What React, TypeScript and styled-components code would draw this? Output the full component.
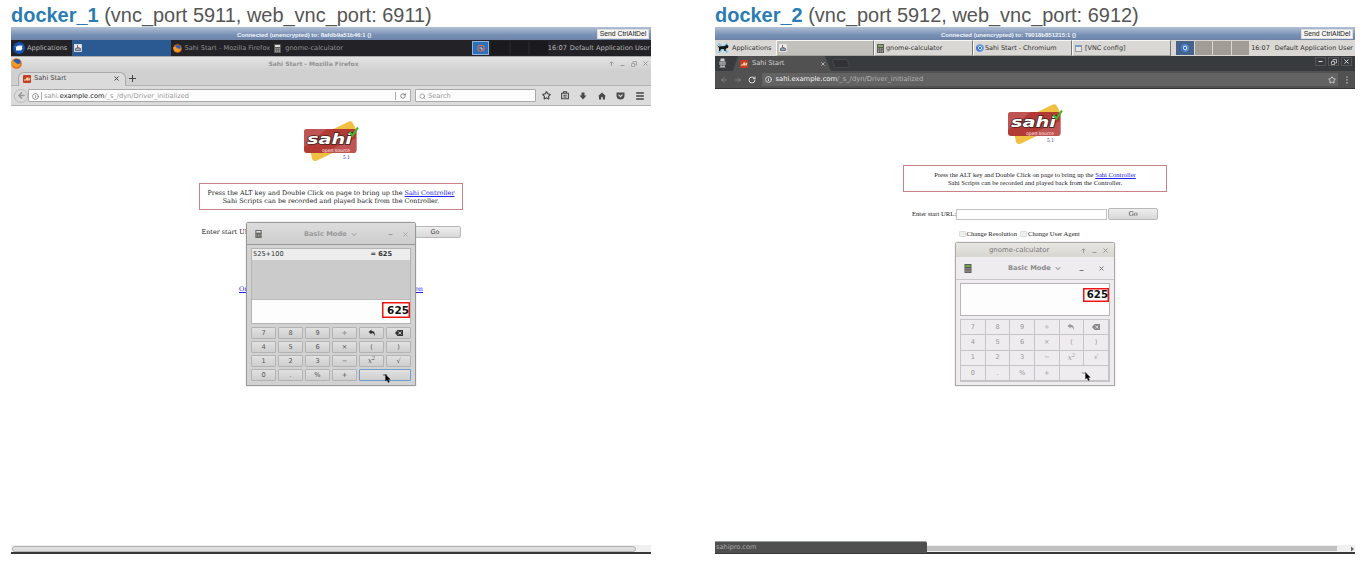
import React from "react";
import styled, { createGlobalStyle, css } from "styled-components";
import { Star, Menu, Search, RotateCw, Info, ArrowLeft, ArrowRight } from "lucide-react";

const sans = `"DejaVu Sans", sans-serif`;
const serif = `"DejaVu Serif", serif`;

const Global = createGlobalStyle`
  * { box-sizing: border-box; }
  body { margin: 0; background: #fff; overflow: hidden; }
`;

const Page = styled.main`
  display: flex;
  gap: 64px;
  padding-left: 11px;
  width: 1364px;
  height: 561px;
  font: 6.6px/1 ${sans};
  white-space: nowrap;
`;
const Column = styled.section`
  width: 640px;
  display: flex;
  flex-direction: column;
`;
const Heading = styled.h2`
  margin: 0;
  height: 27px;
  padding-top: 4px;
  font: 19.97px/23px "Liberation Sans", Arial, sans-serif;
  color: #555;
  b { color: #2b7cb3; }
`;
const Screen = styled.div`
  position: relative;
  height: 527px;
  display: flex;
  flex-direction: column;
  background: #fff;
`;
const VncBar = styled.div`
  height: 13px;
  flex: none;
  display: flex;
  align-items: center;
  background: linear-gradient(#b3c1d6, #7890b4 60%, #6d84a8);
  color: #f2f5fa;
  font: bold 6px/1 "Liberation Sans", sans-serif;
  padding: 0 2px 0 226px;
  > span { padding-top: 3px; }
`;
const SendKeys = styled.button`
  margin-left: auto;
  width: 52px;
  height: 10px;
  padding: 0;
  border: 1px solid #ddd;
  background: #f5f5f5;
  color: #222;
  font: 6.8px/8px "Liberation Sans", sans-serif;
`;
const Taskbar = styled.div<{ $light?: boolean }>`
  height: ${(p) => (p.$light ? 16 : 17)}px;
  flex: none;
  display: flex;
  align-items: stretch;
  background: ${(p) => (p.$light ? "#dad8d4" : "#232226")};
  color: ${(p) => (p.$light ? "#333" : "#b8b8b8")};
  border-bottom: ${(p) => (p.$light ? "0" : "1px solid #aaa")};
  font-size: ${(p) => (p.$light ? 6.45 : 6.6)}px;
`;
const Task = styled.div<{ $w: number; $bg?: string; $edge?: boolean; $color?: string; $gap?: number }>`
  width: ${(p) => p.$w}px;
  display: flex;
  align-items: center;
  gap: ${(p) => p.$gap ?? 2}px;
  padding-left: 2px;
  background: ${(p) => p.$bg ?? "transparent"};
  color: ${(p) => p.$color ?? "inherit"};
  ${(p) => p.$edge && css`border: 1px solid; border-color: #f7f7f5 #777 #a5a5a0 #f7f7f5;`}
`;
const Pager = styled.div<{ $light?: boolean; $gap: number }>`
  display: flex;
  margin-left: ${(p) => p.$gap}px;
  padding: 1px 0;
  gap: ${(p) => (p.$light ? 1 : 2)}px;
`;
const Desk = styled.div<{ $bg: string; $line?: string }>`
  width: 17.5px;
  display: flex;
  align-items: center;
  justify-content: center;
  background: ${(p) => p.$bg};
  border: 1px solid ${(p) => p.$line ?? p.$bg};
`;
const Clock = styled.div<{ $gap: number; $pad: number }>`
  margin-left: auto;
  display: flex;
  align-items: center;
  gap: ${(p) => p.$gap}px;
  padding-right: ${(p) => p.$pad}px;
`;

/* Firefox window */
const FxTitle = styled.div`
  height: 13px;
  flex: none;
  display: flex;
  justify-content: space-between;
  align-items: center;
  padding-right: 3px;
  background: linear-gradient(#e4e4e4, #d2d1d2);
  color: #929292;
  font-weight: bold;
  font-size: 6px;
  > span { padding-right: 4px; }
`;
const WinControls = styled.div<{ $gap: number }>`
  display: flex;
  justify-content: flex-end;
  align-items: center;
  gap: ${(p) => p.$gap}px;
`;
const FxTabs = styled.div`
  height: 16px;
  flex: none;
  display: flex;
  align-items: flex-end;
  background: #d1d0d1;
  border-bottom: 1px solid #b5b4b5;
`;
const FxTab = styled.div`
  width: 108px;
  height: 14px;
  margin: 0 0 -1px 7px;
  display: flex;
  align-items: center;
  gap: 3px;
  padding: 0 6px 2px 4px;
  background: #dcdbdc;
  border: 1px solid #aaa;
  border-bottom: 0;
  border-radius: 6px 6px 0 0;
  color: #444;
  svg:last-child { margin-left: auto; }
`;
const NewTab = styled.div`
  width: 12px;
  height: 14px;
  display: flex;
  align-items: center;
  justify-content: center;
`;
const FxTools = styled.div`
  height: 20px;
  flex: none;
  display: flex;
  align-items: center;
  background: #dcdbdc;
  border-bottom: 1px solid #b3b3b3;
  color: #444;
`;
const BackButton = styled.div`
  width: 14px;
  height: 14px;
  margin-left: 3px;
  border: 1px solid #bbb;
  border-radius: 50%;
  display: flex;
  align-items: center;
  justify-content: center;
  color: #999;
`;
const Field = styled.div<{ $w: number; $ml?: number }>`
  width: ${(p) => p.$w}px;
  height: 13px;
  margin-left: ${(p) => p.$ml ?? 0}px;
  display: flex;
  align-items: center;
  gap: 2px;
  padding: 1px 0 0 3px;
  background: #fcfcfc;
  border: 1px solid #a9a9a9;
  border-radius: 1px;
  color: #999;
  font-size: 6.63px;
  b { font-weight: normal; color: #222; }
`;
const Rule = styled.i`
  width: 1px;
  height: 8px;
  background: #aaa;
`;
const Reload = styled.span`
  margin-left: auto;
  width: 15px;
  height: 8px;
  display: flex;
  align-items: center;
  justify-content: center;
  border-left: 1px solid #aaa;
`;
const Tools = styled.div`
  flex: 1;
  display: flex;
  align-items: center;
  justify-content: space-between;
  padding: 0 6px 0 6px;
`;

/* Chromium window */
const CrTabs = styled.div`
  height: 15px;
  flex: none;
  display: flex;
  align-items: flex-end;
  background: #373b3e;
  color: #d4d4d4;
  padding-left: 3px;
  > svg { margin-bottom: 3px; }
`;
const CrTab = styled.div`
  width: 98px;
  height: 15px;
  margin-left: 6px;
  display: flex;
  align-items: center;
  gap: 4px;
  padding: 0 6px 0 7px;
  background: #515151;
  clip-path: polygon(5px 0, calc(100% - 6px) 0, 100% 100%, 0 100%);
  svg:last-child { margin-left: auto; }
`;
const CrGhost = styled.div`
  width: 16px;
  height: 9px;
  margin: 0 0 3px 2px;
  background: #303235;
  border: 1px solid #46464a;
  border-radius: 2px;
  transform: skewX(20deg);
`;
const CrWin = styled.div`
  display: flex;
  gap: 2px;
  margin: 0 3px 5px auto;
`;
const CrWinButton = styled.div`
  width: 11px;
  height: 9px;
  display: flex;
  align-items: center;
  justify-content: center;
  border: 1px solid #555;
`;
const CrTools = styled.div`
  height: 18px;
  flex: none;
  display: flex;
  align-items: center;
  gap: 6px;
  padding: 0 5px;
  background: #515151;
  border-bottom: 1px solid #333;
  color: #808080;
`;
const CrUrl = styled.div`
  flex: 1;
  height: 13px;
  display: flex;
  align-items: center;
  gap: 3.500px;
  padding: 0 2px 0 3px;
  background: #636363;
  color: #b2b2b2;
  font-size: 6.75px;
  b { font-weight: normal; color: #f4f4f4; }
  svg:last-child { margin-left: auto; }
`;

/* Page shown in both browsers */
const Doc = styled.div<{ $small?: boolean }>`
  flex: 1;
  display: flex;
  flex-direction: column;
  align-items: center;
  color: #222;
  font: ${(p) => (p.$small ? `6.62px/8px "Liberation Serif", serif` : `6.43px/8px ${serif}`)};
  padding-top: 12px;
  a { color: #2222e8; text-decoration: underline; }
`;
const Notice = styled.div<{ $mt: number }>`
  width: 264px;
  height: 27px;
  margin-top: ${(p) => p.$mt}px;
  padding-top: 5px;
  border: 1px solid #ca8286;
  text-align: center;
`;
const Form = styled.div<{ $w: number; $mt: number; $ml?: number }>`
  width: ${(p) => p.$w}px;
  margin-top: ${(p) => p.$mt}px;
  margin-left: ${(p) => p.$ml ?? 0}px;
  height: 12px;
  display: flex;
  align-items: center;
`;
const Input = styled.div`
  width: 151px;
  height: 11px;
  margin: 0 1px 0 auto;
  border: 1px solid #c4c4c4;
`;
const Go = styled.button<{ $w: number; $auto?: boolean }>`
  width: ${(p) => p.$w}px;
  height: 12px;
  margin-left: ${(p) => (p.$auto ? "auto" : "0")};
  padding: ${(p) => (p.$auto ? "0 0 0 9px" : "0")};
  border: 1px solid #b8b8b8;
  border-radius: 2px;
  background: linear-gradient(#eee, #d8d8d8);
  color: #444;
  font: inherit;
  font-family: ${(p) => (p.$auto ? sans : serif)};
`;
const Check = styled.i`
  width: 7px;
  height: 6px;
  margin: 0 1px 0 3px;
  border: 1px solid #ddd;
  border-radius: 1px;
  background: #efefef;
`;
const Links = styled.div`
  width: 184px;
  margin-top: 47px;
  display: flex;
  justify-content: space-between;
`;

/* Calculators */
const Calc = styled.div<{ $x: number; $y: number; $w: number; $h: number; $light?: boolean }>`
  position: absolute;
  left: ${(p) => p.$x}px;
  top: ${(p) => p.$y}px;
  width: ${(p) => p.$w}px;
  height: ${(p) => p.$h}px;
  background: ${(p) => (p.$light ? "#eeecef" : "#d3d2d3")};
  border: 1px solid ${(p) => (p.$light ? "#aaa9a5" : "#999")};
  border-radius: 3px 3px 0 0;
  box-shadow: 0 0 1px #888;
  color: ${(p) => (p.$light ? "#999" : "#555")};
`;
const CalcTitle = styled.div`
  height: 14px;
  display: flex;
  align-items: center;
  padding: 0 6px 0 33px;
  background: linear-gradient(#e9e7e3, #d7d5d0);
  color: #777;
  font-size: 6.9px;
  > :last-child { margin-left: auto; }
`;
const CalcHead = styled.div<{ $light?: boolean }>`
  height: ${(p) => (p.$light ? 23 : 22)}px;
  display: flex;
  align-items: center;
  padding: 1px ${(p) => (p.$light ? 10 : 7)}px 0 8px;
  border-bottom: 1px solid ${(p) => (p.$light ? "#c9c7ca" : "#999")};
  background: ${(p) => (p.$light ? "#eeecef" : "linear-gradient(#dddcdd, #cfcecf)")};
  color: ${(p) => (p.$light ? "#8a8a8a" : "#999")};
  font-weight: bold;
  font-size: 6.7px;
  > span { margin-left: ${(p) => (p.$light ? 36 : 42)}px; margin-right: 4px; }
  > :last-child { margin-left: auto; }
`;
const Display = styled.div<{ $light?: boolean }>`
  height: ${(p) => (p.$light ? 33 : 76)}px;
  margin: 3px 4px 0;
  display: flex;
  flex-direction: column;
  border: 1px solid #b5b5b5;
  background: #fdfdfd;
`;
const History = styled.div`
  height: 51px;
  background: #cccbcc;
  border-bottom: 1px solid #bbb;
`;
const Entry = styled.div`
  height: 11px;
  display: flex;
  align-items: center;
  justify-content: space-between;
  padding: 0 18px 0 1px;
  background: #ededed;
  color: #333;
`;
const Result = styled.div<{ $w: number; $h: number; $size: number }>`
  align-self: flex-end;
  width: ${(p) => p.$w}px;
  height: ${(p) => p.$h}px;
  margin-top: ${(p) => (p.$size > 10.3 ? 2 : 4)}px;
  padding-top: 1px;
  display: flex;
  align-items: center;
  justify-content: flex-end;
  box-shadow: inset 0 0 0 1.5px #f01414;
  color: #111;
  font-weight: bold;
  font-size: ${(p) => p.$size}px;
  padding-right: 1px;
`;
const Keys = styled.div<{ $light?: boolean }>`
  display: grid;
  grid-template-columns: repeat(6, 1fr);
  ${(p) =>
    p.$light
      ? css`grid-auto-rows: 15.3px; margin: 3px 4px 0; border: 1px solid #c5c4c6;`
      : css`grid-auto-rows: 12px; gap: 2px; margin: 3px 4px 0;`}
`;
const Key = styled.div<{ $light?: boolean; $wide?: boolean }>`
  display: flex;
  align-items: center;
  justify-content: center;
  grid-column: span ${(p) => (p.$wide ? 2 : 1)};
  ${(p) =>
    p.$light
      ? css`border: solid #c5c4c6; border-width: 0 1px 1px 0;`
      : css`
          border: 1px solid ${p.$wide ? "#6f9cc9" : "#b3b3b3"};
          border-radius: 1px;
          background: linear-gradient(#e2e1e2, #cfcecf);
        `}
  em { font-family: ${serif}; font-size: 7px; padding-top: 2px; }
  sup { font-size: 5px; line-height: 0; }
`;
const Cursor = styled.svg<{ $x: number; $y: number }>`
  position: absolute;
  left: ${(p) => p.$x}px;
  top: ${(p) => p.$y}px;
`;

/* Bottom of each screen */
const Bottom = styled.div`
  height: 9px;
  flex: none;
  display: flex;
  background: #f0f0f0;
  border-bottom: 2px solid #383838;
`;
const FxThumb = styled.div`
  width: 624px;
  height: 6px;
  margin: 1px 0 0 1px;
  border: 1px solid #b2b2b2;
  border-radius: 3px;
  background: #dedede;
`;
const CrThumb = styled.div`
  width: 410px;
  height: 5px;
  margin: 1px 13px 0 212px;
  background: #c0c0c0;
  flex: none;
`;
const Status = styled.div`
  position: absolute;
  left: 0;
  bottom: 1px;
  width: 212px;
  height: 12px;
  padding: 2px 0 0 1px;
  border-top: 1px solid #9aa09c;
  border-radius: 0 2px 0 0;
  background: #4f4f4f;
  color: #aaa;
  font-size: 6.6px;
`;

const SahiFavicon = () => (
  <svg width="8" height="8" viewBox="0 0 8 8">
    <rect width="8" height="8" rx="1" fill="#c53d22" />
    <path d="M1 5h2l1-2h1l-.5 2H6l1-2" stroke="#ffe2b8" strokeWidth="1.1" fill="none" />
  </svg>
);
const Firefox = ({ size = 9 }: { size?: number }) => (
  <svg width={size} height={size} viewBox="0 0 10 10">
    <circle cx="5" cy="5" r="4.8" fill="#e06a1a" />
    <circle cx="5.4" cy="4" r="3" fill="#2a5fae" />
    <path d="M.3 3.5C1.5 2 3 3 4.2 4.2c1 1 2.4 1.8 4.5.4C8.500 8 6 9 4 8.500 1.500 8 .4 6 .3 3.500z" fill="#f09a28" />
  </svg>
);
const Chromium = () => (
  <svg width="8" height="8" viewBox="0 0 10 10">
    <circle cx="5" cy="5" r="4.7" fill="#5c94ea" />
    <path d="M5 5L1 2.500A4.700 4.700 0 0 0 4 9.600z" fill="#3c72cf" />
    <circle cx="5" cy="5" r="2.100" fill="#3a6fd0" stroke="#fff" strokeWidth=".9" />
  </svg>
);
const VncIcon = () => (
  <svg width="8" height="8" viewBox="0 0 8 8">
    <rect x=".5" y=".5" width="7" height="7" fill="#e8e8e8" stroke="#eee" strokeWidth=".7" />
    <path d="M3.500 1v3M1.500 6.500V4.500l2-.7 3 .7v2z" stroke="#456" fill="#9ab" strokeWidth=".8" />
    <path d="M3.500 2.800L6 4.500" stroke="#b55" strokeWidth=".8" />
  </svg>
);
const CalcIcon = ({ screen = "#ddd", w = 7, h = 9 }: { screen?: string; w?: number; h?: number }) => (
  <svg width={w} height={h} viewBox="0 0 7 9">
    <rect width="7" height="9" rx=".6" fill="#5a5a56" />
    <rect x="1" y="1" width="5" height="2" fill={screen} />
    <path d="M1 4.700h5M1 6.200h5M1 7.700h5" stroke="#bbb" strokeWidth=".8" strokeDasharray="1.200 .7" />
  </svg>
);
const Xfce = ({ light }: { light?: boolean }) => (
  <svg width="12" height="12" viewBox="0 0 12 12">
    {light ? (
      <>
        <path d="M1.500 1.500l9 9M10.500 1.500l-9 9" stroke="#7cc9e3" strokeWidth="2.400" />
        <path d="M0 3l2 1.500 6-.5L9.500 2.500 11.500 4 11 6 9 6.500 8.500 9H7.500L7 7H4L3 9H2V6z" fill="#151515" />
      </>
    ) : (
      <>
        <circle cx="6" cy="6" r="6" fill="#1450ae" />
        <path d="M3 8.500V6L2.500 4l1.500.7L5 3l1 1.500L7 2.500l.7 1.700L9.500 3 9 5l.5 1.500L8 8.500z" fill="#fff" />
      </>
    )}
  </svg>
);
const Cross = ({ c = "#777", s = 5 }: { c?: string; s?: number }) => (
  <svg width={s} height={s} viewBox="0 0 5 5"><path d="M.5.5l4 4M4.500.5l-4 4" stroke={c} strokeWidth="1" /></svg>
);
const Dash = ({ c = "#999", low }: { c?: string; low?: boolean }) => (
  <svg width="5" height="5" viewBox="0 0 5 5"><path d={low ? "M.5 4.500h4" : "M.5 2.500h4"} stroke={c} /></svg>
);
const Up = () => (
  <svg width="5" height="5" viewBox="0 0 5 5"><path d="M2.500 5V1M.7 2.500L2.500.7l1.800 1.800" stroke="#999" fill="none" /></svg>
);
const Restore = ({ c = "#999" }: { c?: string }) => (
  <svg width="6" height="6" viewBox="0 0 6 6"><path d="M.5 2.500h3v3h-3zM2 2V.5h3.500V4H4" stroke={c} fill="none" strokeWidth=".8" /></svg>
);
const PagerWindow = () => (
  <svg width="8" height="8" viewBox="0 0 8 8">
    <rect x="1" y="1.500" width="6" height="5.500" rx="1.500" fill="#3b62b5" stroke="#e0763a" strokeWidth="1.200" />
    <path d="M2.500 4H5v2" stroke="#f3d9b0" strokeWidth=".9" fill="none" />
  </svg>
);
const Chevron = ({ c }: { c: string }) => (
  <svg width="6" height="5" viewBox="0 0 6 5"><path d="M.8 1.200L3 3.600l2.200-2.400" stroke={c} fill="none" /></svg>
);
const Undo = ({ c }: { c: string }) => (
  <svg width="8" height="8" viewBox="0 0 8 8">
    <path d="M.5 3L3.500.5v1.600C6 2 7.500 4 6.500 7.500 6.300 5 5.500 4 3.500 4v1.500z" fill={c} />
  </svg>
);
const Erase = ({ c }: { c: string }) => (
  <svg width="8" height="6" viewBox="0 0 8 6">
    <path d="M0 3L2.500 0H8v6H2.500z" fill={c} />
    <path d="M3.300 1.500l3 3M6.300 1.500l-3 3" stroke="#ddd" />
  </svg>
);
const Clipboard = () => (
  <svg width="8" height="9" viewBox="0 0 8 9">
    <path d="M.6 2.300h6.800v5.500H.6zM2.500 2.300V.8h3v1.500M2.300 4.200h3.400M2.300 6h3.400" fill="none" stroke="#484848" strokeWidth="1.100" />
  </svg>
);
const Download = () => (
  <svg width="8" height="8" viewBox="0 0 8 8">
    <path d="M2.500.5h3v3h2L4 7.500.5 3.500h2z" fill="#484848" />
  </svg>
);
const House = () => (
  <svg width="8" height="8" viewBox="0 0 8 8">
    <path d="M4 .5L8 4.200H7v3.300H4.800V5H3.200v2.500H1V4.200H0z" fill="#484848" />
  </svg>
);
const Pocket = () => (
  <svg width="9" height="8" viewBox="0 0 9 8">
    <path d="M.5.5h8v3a4 4 0 0 1-8 0z" fill="#4c4c4c" />
    <path d="M2.500 2.700l2 2 2-2" stroke="#ddd" fill="none" strokeWidth="1.100" />
  </svg>
);
const Incognito = () => (
  <svg width="9" height="10" viewBox="0 0 9 11">
    <path d="M2.500.5h4L7 3.500H2zM.5 4h8v1h-8z" fill="#ccc" />
    <circle cx="2.800" cy="6.600" r="1.300" fill="none" stroke="#ccc" />
    <circle cx="6.200" cy="6.600" r="1.300" fill="none" stroke="#ccc" />
    <path d="M1 10.500l1.500-2h4l1.500 2z" fill="#bbb" />
  </svg>
);
const LogoArt = styled.svg`
  flex: none;
  width: 62px;
  height: 44px;
`;
const Logo = () => (
  <LogoArt viewBox="0 0 62 44">
    <path d="M8.500 23L49 3.500Q51.500 2.500 52.500 4.500L56.500 12 56 24 17 42.500Q13.500 44 12 41z" fill="#f0c043" />
    <rect x="4" y="11" width="52.500" height="24" rx="3" fill="#b23a34" />
    <path d="M4 14q0-3 3-3h20L4 29zM56.500 20v12q0 3-3 3H22z" fill="#c8666a" opacity=".6" />
    <text x="7" y="26" fontFamily="DejaVu Sans" fontSize="13.500" fontWeight="bold" fontStyle="italic" fill="#fff" stroke="#3b2020" strokeWidth="1.300" paintOrder="stroke" textLength="45" lengthAdjust="spacingAndGlyphs">sahi</text>
    <text x="22" y="33.700" fontFamily="DejaVu Sans" fontSize="4.800" fill="#ffe9e2" textLength="28" lengthAdjust="spacingAndGlyphs">open source</text>
    <path d="M49.500 14l3 3.500L58 9.500" stroke="#45b32b" strokeWidth="2.200" fill="none" />
    <text x="43" y="41" fontFamily="DejaVu Serif" fontSize="5" fill="#2a22a8" textLength="7" lengthAdjust="spacingAndGlyphs">5.1</text>
  </LogoArt>
);
const Pointer = ({ x, y }: { x: number; y: number }) => (
  <Cursor $x={x} $y={y} width="6" height="9" viewBox="0 0 6 9">
    <path d="M.5.5v6.500l1.500-1.200L3.200 8.500l1.200-.5-1.100-2.600h2z" fill="#000" stroke="#222" strokeWidth=".4" />
  </Cursor>
);

const rows = [
  ["7", "8", "9", "÷", "undo", "erase"],
  ["4", "5", "6", "×", "(", ")"],
  ["1", "2", "3", "−", "sq", "√"],
  ["0", ".", "%", "+", "="],
];
const Keypad = ({ light }: { light?: boolean }) => (
  <Keys $light={light}>
    {rows.flat().map((k) => (
      <Key key={k} $light={light} $wide={k === "="}>
        {k === "undo" ? <Undo c={light ? "#999" : "#333"} />
          : k === "erase" ? <Erase c={light ? "#888" : "#333"} />
          : k === "sq" ? <em>x<sup>2</sup></em>
          : k}
      </Key>
    ))}
  </Keys>
);

const FirefoxScreen = () => (
  <Screen>
    <VncBar><span>Connected (unencrypted) to: 8afdb9a51b46:1 ()</span><SendKeys>Send CtrlAltDel</SendKeys></VncBar>
    <Taskbar>
      <Task $w={61}><Xfce />Applications</Task>
      <Task $w={100} $bg="#2b5a92"><VncIcon /></Task>
      <Task $w={101} $color="#929292"><Firefox />Sahi Start - Mozilla Firefox</Task>
      <Task $w={98} $color="#929292"><CalcIcon />&nbsp;gnome-calculator</Task>
      <Pager $gap={102}>
        <Desk $bg="#2c6fbb" $line="#8db2dc"><PagerWindow /></Desk>
        <Desk $bg="#1a1a1c" /><Desk $bg="#1a1a1c" /><Desk $bg="#1a1a1c" />
      </Pager>
      <Clock $gap={3} $pad={1}><span>16:07</span><span>Default Application User</span></Clock>
    </Taskbar>
    <FxTitle>
      <Firefox size={11} />
      <span>Sahi Start - Mozilla Firefox</span>
      <WinControls $gap={6}><Up /><Dash low /><Restore /><Cross c="#999" /></WinControls>
    </FxTitle>
    <FxTabs>
      <FxTab><SahiFavicon />Sahi Start<Cross c="#444" /></FxTab>
      <NewTab><svg width="7" height="7" viewBox="0 0 7 7"><path d="M3.500 0v7M0 3.500h7" stroke="#444" /></svg></NewTab>
    </FxTabs>
    <FxTools>
      <BackButton><ArrowLeft size={9} strokeWidth={4} /></BackButton>
      <Field $w={383}>
        <Info size={7} color="#555" /><Rule />
        <span>sahi.<b>example.com</b>/_s_/dyn/Driver_initialized</span>
        <Reload><RotateCw size={6} color="#666" strokeWidth={3} /></Reload>
      </Field>
      <Field $w={121} $ml={4}><Search size={7} color="#777" />Search</Field>
      <Tools>
        <Star size={9} strokeWidth={3} />
        <Clipboard />
        <Download />
        <House />
        <Pocket />
        <Menu size={10} strokeWidth={3.5} />
      </Tools>
    </FxTools>
    <Doc>
      <Logo />
      <Notice $mt={21}>
        Press the ALT key and Double Click on page to bring up the <a>Sahi Controller</a><br />
        Sahi Scripts can be recorded and played back from the Controller.
      </Notice>
      <Form $w={259} $mt={16}>Enter start URL:<Go $w={60} $auto>Go</Go></Form>
      <Links><a>On</a><a>on</a></Links>
    </Doc>
    <Bottom><FxThumb /></Bottom>
    <Calc $x={235} $y={195} $w={170} $h={164}>
      <CalcHead><CalcIcon w={7} h={8} /><span>Basic Mode</span><Chevron c="#999" />
        <WinControls $gap={10}><Dash /><Cross c="#aaa" /></WinControls></CalcHead>
      <Display>
        <History><Entry><span>525+100</span><b>= 625</b></Entry></History>
        <Result $w={28} $h={16} $size={10.5}>625</Result>
      </Display>
      <Keypad />
    </Calc>
    <Pointer x={374} y={347} />
  </Screen>
);

const ChromiumScreen = () => (
  <Screen>
    <VncBar><span>Connected (unencrypted) to: 79018b851215:1 ()</span><SendKeys>Send CtrlAltDel</SendKeys></VncBar>
    <Taskbar $light>
      <Task $w={61} $gap={3}><Xfce light />Applications</Task>
      <Task $w={98} $edge $bg="#c2c0bb"><VncIcon /></Task>
      <Task $w={99} $edge><CalcIcon screen="#8aa86a" />gnome-calculator</Task>
      <Task $w={99} $edge $gap={1}><Chromium />Sahi Start - Chromium</Task>
      <Task $w={99} $edge $gap={3}>
        <svg width="7" height="7" viewBox="0 0 7 7"><rect x=".5" y=".5" width="6" height="6" fill="#e8e8e8" stroke="#999" /><path d="M0 1h7" stroke="#7d9dc5" strokeWidth="2" /></svg>
        [VNC config]
      </Task>
      <Pager $light $gap={5}>
        <Desk $bg="#46648a"><Chromium /></Desk>
        <Desk $bg="#a19d96" /><Desk $bg="#a19d96" /><Desk $bg="#a19d96" />
      </Pager>
      <Clock $gap={5} $pad={2}><span>16:07</span><span>Default Application User</span></Clock>
    </Taskbar>
    <CrTabs>
      <Incognito />
      <CrTab><SahiFavicon />Sahi Start<Cross c="#ccc" s={4} /></CrTab>
      <CrGhost />
      <CrWin>
        <CrWinButton><Dash c="#ddd" /></CrWinButton>
        <CrWinButton><Restore c="#ccc" /></CrWinButton>
        <CrWinButton><Cross c="#ddd" /></CrWinButton>
      </CrWin>
    </CrTabs>
    <CrTools>
      <ArrowLeft size={8} strokeWidth={3} /><ArrowRight size={8} strokeWidth={3} /><RotateCw size={8} color="#ddd" strokeWidth={3} />
      <CrUrl><Info size={7} color="#ddd" strokeWidth={3} /><span><b>sahi.example.com</b>/_s_/dyn/Driver_initialized</span><Star size={8} color="#ddd" strokeWidth={2.5} /></CrUrl>
      <svg width="6" height="8" viewBox="0 0 6 8"><path d="M3 .5v7" stroke="#ccc" strokeWidth="1.200" strokeDasharray="1.300 1.500" /></svg>
    </CrTools>
    <Doc $small>
      <Logo />
      <Notice $mt={20}>
        Press the ALT key and Double Click on page to bring up the <a>Sahi Controller</a><br />
        Sahi Scripts can be recorded and played back from the Controller.
      </Notice>
      <Form $w={246} $mt={16}>Enter start URL:<Input /><Go $w={50}>Go</Go></Form>
      <Form $w={130} $mt={8} $ml={-29}><Check />Change Resolution<Check />Change User Agent</Form>
    </Doc>
    <Bottom><CrThumb /><svg width="5" height="7" viewBox="0 0 5 7"><path d="M1 1.500L4 4 1 6.500z" fill="#666" /></svg></Bottom>
    <Status>sahipro.com</Status>
    <Calc $light $x={240} $y={215} $w={160} $h={144}>
      <CalcTitle>gnome-calculator<WinControls $gap={6}><Up /><Dash low /><Cross c="#999" /></WinControls></CalcTitle>
      <CalcHead $light><CalcIcon screen="#72a850" w={8} h={9} /><span>Basic Mode</span><Chevron c="#777" />
        <WinControls $gap={15}><Dash low c="#777" /><Cross c="#777" /></WinControls></CalcHead>
      <Display $light><Result $w={26} $h={14} $size={10.2}>625</Result></Display>
      <Keypad light />
    </Calc>
    <Pointer x={370} y={345} />
  </Screen>
);

export default function App() {
  return (
    <>
      <Global />
      <Page>
        <Column>
          <Heading><b>docker_1</b> (vnc_port 5911, web_vnc_port: 6911)</Heading>
          <FirefoxScreen />
        </Column>
        <Column>
          <Heading><b>docker_2</b> (vnc_port 5912, web_vnc_port: 6912)</Heading>
          <ChromiumScreen />
        </Column>
      </Page>
    </>
  );
}
